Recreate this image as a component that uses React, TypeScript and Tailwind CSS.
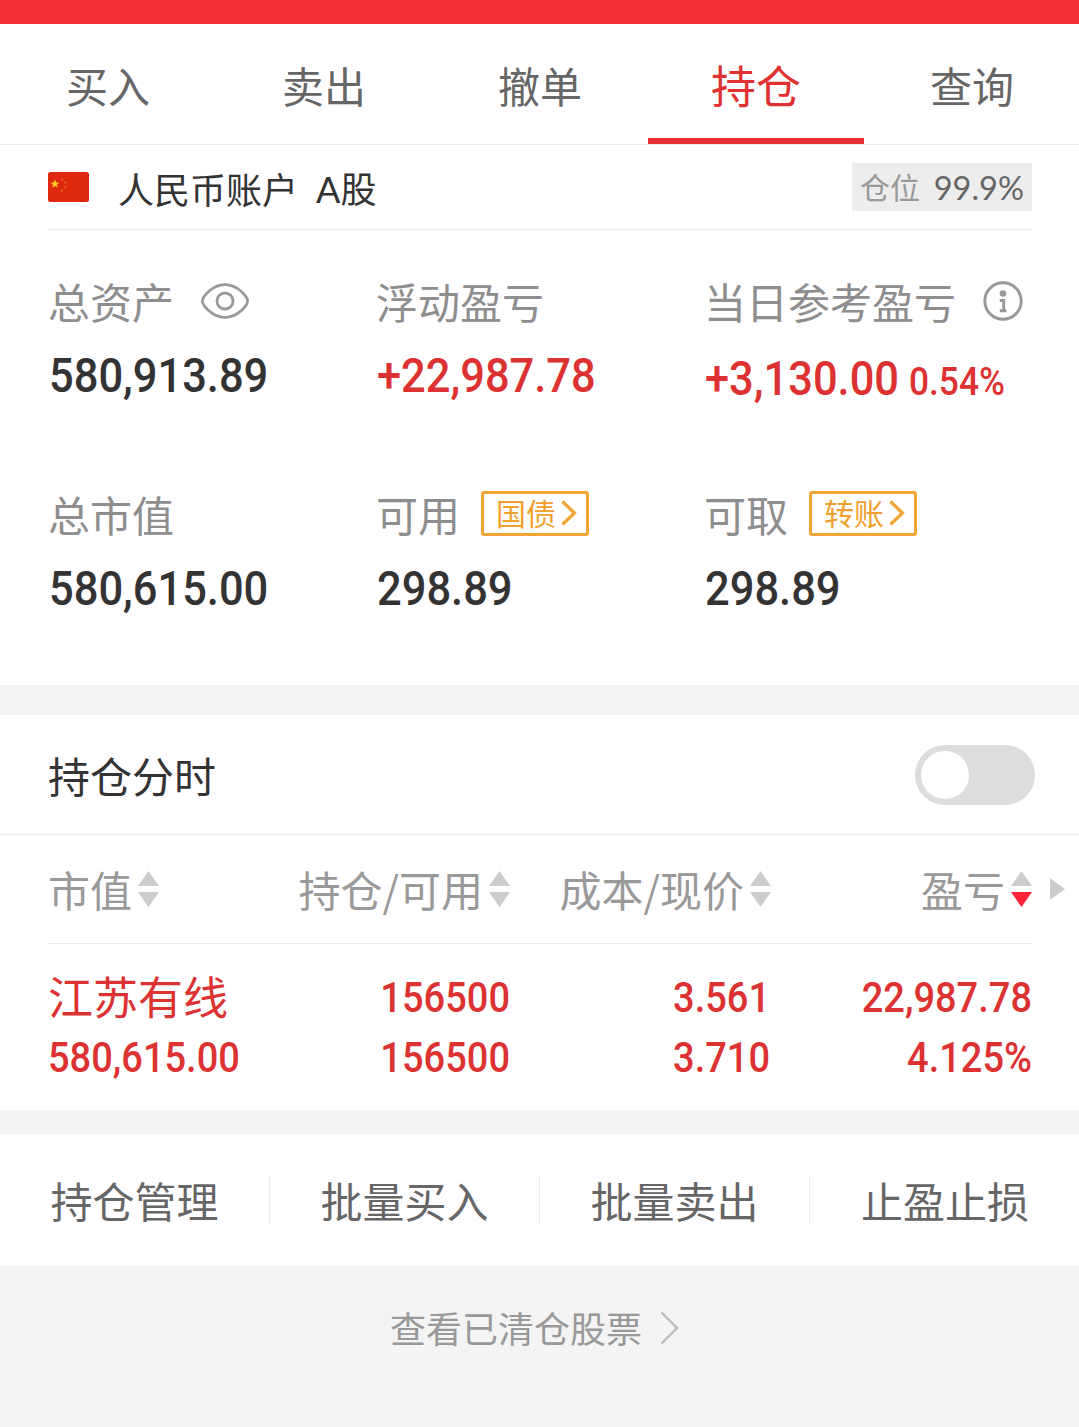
import React, { useState } from 'react';
import clsx from 'clsx';

const tabs = ['买入', '卖出', '撤单', '持仓', '查询'];
const actions = ['持仓管理', '批量买入', '批量卖出', '止盈止损'];

const columns = [
  { label: '市值', sort: '', width: 'w-[112px]' },
  { label: '持仓/可用', sort: '', width: 'w-[351px]' },
  { label: '成本/现价', sort: '', width: 'w-[261px]' },
  { label: '盈亏', sort: 'desc', width: 'w-[261px]' },
];

function Num({ children, className }: { children: React.ReactNode; className?: string }) {
  return (
    <span
      className={clsx(
        "block scale-x-[0.905] whitespace-nowrap font-['Roboto',sans-serif] font-medium",
        className,
      )}
    >
      {children}
    </span>
  );
}

function FlagIcon() {
  return (
    <svg width="41" height="30" viewBox="0 0 41 30">
      <rect width="41" height="30" rx="2.5" fill="#de2910" />
      <path d="M7 7.500l1.200 3 3.200.2-2.500 2 .9 3.100L7 14l-2.800 1.800.9-3.100-2.500-2 3.200-.2z" fill="#ffc71f" />
      <g fill="#ec5a20">
        <circle cx="14" cy="7.5" r="1.3" />
        <circle cx="17.5" cy="10.5" r="1.3" />
        <circle cx="17.5" cy="15" r="1.3" />
        <circle cx="14" cy="18.5" r="1.3" />
      </g>
    </svg>
  );
}

function EyeIcon() {
  return (
    <svg width="48" height="36" viewBox="0 0 48 36" fill="none" stroke="#999" strokeWidth="2.8">
      <path d="M1.400 18C1.400 14.500 10.500 1.600 24 1.600S46.600 14.500 46.600 18 37.500 34.400 24 34.400 1.400 21.500 1.400 18z" />
      <circle cx="24" cy="18" r="8" />
    </svg>
  );
}

function InfoIcon() {
  return (
    <svg width="40" height="40" viewBox="0 0 40 40" fill="none">
      <circle cx="20" cy="20" r="18.200" stroke="#999" strokeWidth="2.900" />
      <circle cx="20" cy="12.500" r="3.300" fill="#999" />
      <path d="M16.800 19.400h3.900v10.400M16.800 29.800h6.600" stroke="#999" strokeWidth="3" />
    </svg>
  );
}

function SortIcon({ sort }: { sort: string }) {
  return (
    <svg width="22" height="36" viewBox="0 0 22 36">
      <path d="M10.500 0L21 15H0z" fill="#ccc" />
      <path d="M10.500 36L0 21h21z" fill={sort === 'desc' ? '#ff2337' : '#ccc'} />
    </svg>
  );
}

function LinkButton({ label }: { label: string }) {
  return (
    <button className="mb-0.5 flex h-[45px] w-[108px] items-center rounded-[3px] border-3 border-[#f0a535] pl-3 text-[30px] leading-[39px] text-[#f0a02c]">
      <span className="-mt-0.5">{label}</span>
      <svg className="ml-[5px]" width="16" height="26" viewBox="0 0 16 26" fill="none">
        <path d="M1.500 1.500L13.500 13 1.500 24.500" stroke="#f0a535" strokeWidth="3.200" />
      </svg>
    </button>
  );
}

function Cell({ label, extra, children }: { label: string; extra?: React.ReactNode; children: React.ReactNode }) {
  return (
    <div>
      <div className="flex h-[60px] items-center text-[42px] leading-[60px] text-[#8e8e8e]">
        {label}
        {extra}
      </div>
      <div className="h-[60px] pt-[15px] pl-px text-[48px] leading-[60px]">{children}</div>
    </div>
  );
}

export default function App() {
  const [active, setActive] = useState('持仓');
  const [showChart, setShowChart] = useState(false);

  return (
    <div className="h-[1427px] w-[1079px] overflow-hidden bg-[#f4f4f4] font-['Noto_Sans_CJK_SC',sans-serif] text-[#333]">
      <div className="h-6 bg-[#f32f38]" />

      <nav className="flex h-[121px] border-b border-[#ebebeb] bg-white">
        {tabs.map((tab) => (
          <button
            key={tab}
            onClick={() => setActive(tab)}
            className={clsx(
              'h-[120px] w-[216px] shrink-0 border-b-6 pt-[7px]',
              tab === active ? 'border-[#e83030] text-[45px] text-[#e03030]' : 'border-transparent text-[42px] text-[#666]',
            )}
          >
            {tab}
          </button>
        ))}
      </nav>

      <section className="h-[540px] bg-white pr-[47px] pl-12">
        <div className="flex h-[85px] items-center border-b border-[#ebebeb]">
          <FlagIcon />
          <span className="ml-[29px] pt-px text-[36px]">人民币账户</span>
          <span className="ml-[18px] pt-px text-[36px]">
            <span className="font-['Lato',sans-serif]">A</span>股
          </span>
          <div className="ml-auto flex h-12 w-[180px] items-center justify-between bg-[#ededed] px-2">
            <span className="pb-0.5 text-[30px] text-[#999]">仓位</span>
            <span className="pt-0.5 font-['Lato',sans-serif] text-[32.500px] text-[#666]">99.9%</span>
          </div>
        </div>

        <div className="grid grid-cols-3 gap-y-[93px] pt-[41px]">
          <Cell label="总资产" extra={<span className="ml-[27px]"><EyeIcon /></span>}>
            <Num className="origin-left">580,913.89</Num>
          </Cell>
          <Cell label="浮动盈亏">
            <Num className="origin-left text-[#dc3232]">+22,987.78</Num>
          </Cell>
          <Cell label="当日参考盈亏" extra={<span className="ml-[27px]"><InfoIcon /></span>}>
            <Num className="mt-[3px] origin-left text-[#dc3232]">
              +3,130.00<span className="ml-[11px] text-[39px]">0.54%</span>
            </Num>
          </Cell>
          <Cell label="总市值">
            <Num className="origin-left">580,615.00</Num>
          </Cell>
          <Cell label="可用" extra={<span className="ml-[21px]"><LinkButton label="国债" /></span>}>
            <Num className="origin-left">298.89</Num>
          </Cell>
          <Cell label="可取" extra={<span className="ml-[21px]"><LinkButton label="转账" /></span>}>
            <Num className="origin-left">298.89</Num>
          </Cell>
        </div>
      </section>

      <section className="mt-[30px] bg-white">
        <div className="flex h-[120px] items-center justify-between border-b border-[#ebebeb] pr-11 pl-12">
          <span className="text-[42px]">持仓分时</span>
          <button
            onClick={() => setShowChart(!showChart)}
            className={clsx('flex h-[60px] w-[120px] items-center rounded-full bg-[#ddd] p-1.5', showChart && 'justify-end')}
          >
            <span className="size-12 rounded-full bg-white" />
          </button>
        </div>

        <div className="flex h-[109px] pl-12">
          <div className="flex w-[984px] shrink-0 items-center border-b border-[#ebebeb] text-[42px] text-[#999]">
            {columns.map((col) => (
              <div key={col.label} className={clsx('flex shrink-0 items-center justify-end gap-1.5', col.width)}>
                <span className="-mt-0.5 whitespace-nowrap">{col.label}</span>
                <SortIcon sort={col.sort} />
              </div>
            ))}
          </div>
          <svg className="mt-[43px] ml-[18px]" width="16" height="22" viewBox="0 0 16 22">
            <path d="M0 0l15 11L0 22z" fill="#ccc" />
          </svg>
        </div>

        <div className="grid h-[166px] grid-cols-[232px_230px_260px_262px] grid-rows-[60px_60px] pt-6 pl-12 text-right text-[42px] leading-[60px] text-[#dc3232]">
          <span className="-mt-0.5 text-left text-[45px]">江苏有线</span>
          <Num className="origin-right">156500</Num>
          <Num className="origin-right">3.561</Num>
          <Num className="origin-right">22,987.78</Num>
          <Num className="origin-left text-left">580,615.00</Num>
          <Num className="origin-right">156500</Num>
          <Num className="origin-right">3.710</Num>
          <Num className="origin-right">4.125%</Num>
        </div>
      </section>

      <section className="mt-6 flex h-[132px] items-center bg-white">
        {actions.map((action) => (
          <button
            key={action}
            className="h-12 w-[270px] shrink-0 border-r border-[#ebebeb] text-[42px] leading-[48px] text-[#666] last:border-r-0"
          >
            {action}
          </button>
        ))}
      </section>

      <button className="flex h-[124px] w-full items-center justify-center pr-[10px] text-[36px] text-[#999]">
        <span className="-mt-0.5">查看已清仓股票</span>
        <svg className="ml-[18px]" width="19" height="34" viewBox="0 0 19 34" fill="none">
          <path d="M1.500 1.500L17 17 1.500 32.500" stroke="#bbb" strokeWidth="2.400" />
        </svg>
      </button>
    </div>
  );
}
